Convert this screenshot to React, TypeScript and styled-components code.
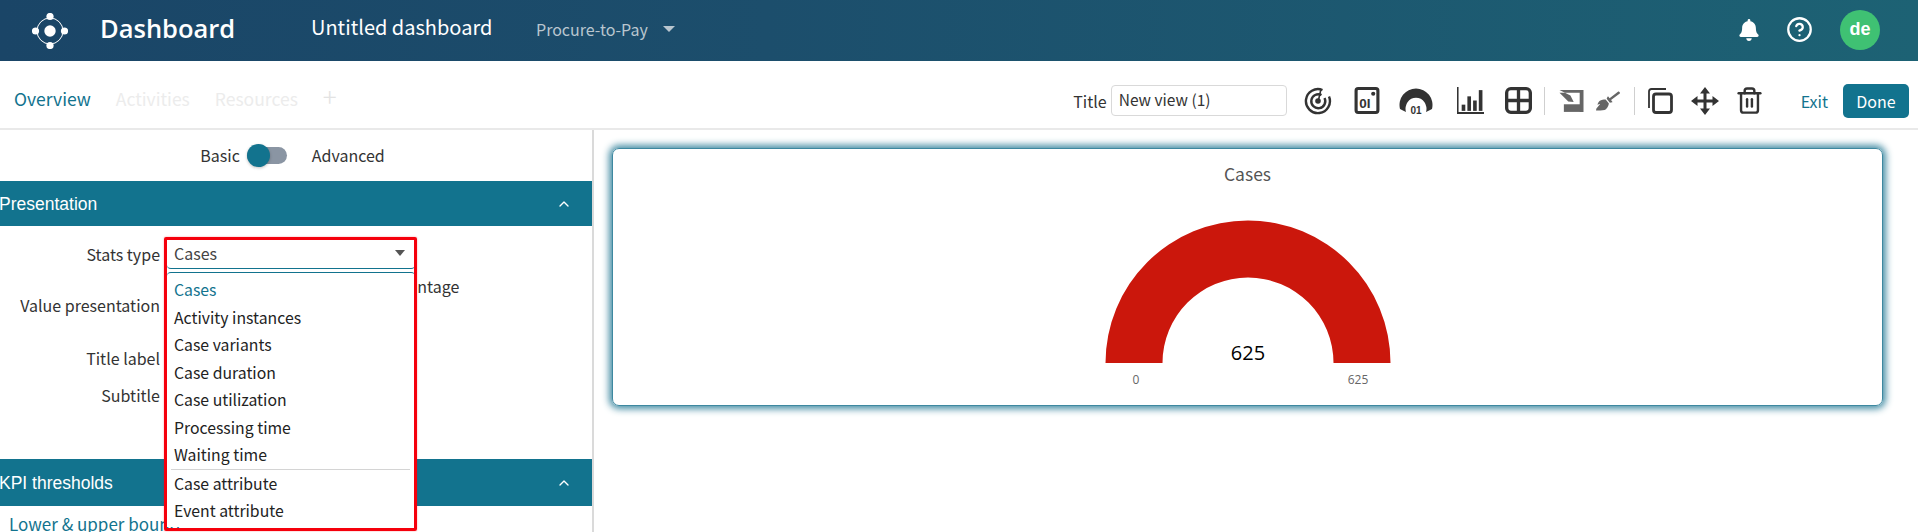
import React from "react";
import styled, { createGlobalStyle } from "styled-components";
import { FaBroom, FaBell } from "react-icons/fa";
import { Trash2, ChevronUp, CircleHelp } from "lucide-react";

const sans = `"Noto Sans CJK SC", "Noto Sans", sans-serif`;
const teal = "#12738e";

const Global = createGlobalStyle`
    html, body {
        margin: 0;
        padding: 0;
        height: 532px;
        overflow: hidden;
        background: #fff;
        font-family: ${sans};
    }
    * { box-sizing: border-box; }
`;

const Page = styled.div`
    width: 1918px;
    height: 532px;
    display: flex;
    flex-direction: column;
    overflow: hidden;
`;
const Header = styled.header`
    height: 61px;
    flex: none;
    display: flex;
    align-items: center;
    padding: 0 38px 0 32px;
    color: #fff;
    background: linear-gradient(90deg, #1a4567 0%, #1c4e6c 40%, #1d6274 100%);
`;
const Brand = styled.div`
    font-family: "Open Sans", sans-serif;
    font-weight: 600;
    font-size: 25.5px;
    margin: 0 0 6px 32px;
    width: 211px;
`;
const BoardName = styled.div`
    font-size: 20px;
    line-height: 28px;
    width: 225px;
    margin-bottom: 8px;
`;
const Process = styled.div`
    font-size: 16px;
    color: #b9c6cf;
    display: flex;
    align-items: center;
    gap: 15px;
    margin-bottom: 3px;
    &::after {
        content: "";
        border-left: 6px solid transparent;
        border-right: 6px solid transparent;
        border-top: 6px solid #b9c6cf;
    }
`;
const HeaderRight = styled.div`
    margin-left: auto;
    display: flex;
    align-items: center;
    margin-bottom: 2px;
`;
const Avatar = styled.div`
    width: 40px;
    height: 40px;
    border-radius: 50%;
    background: #3fc173;
    color: #fff;
    font-family: "Liberation Sans", sans-serif;
    font-weight: 700;
    font-size: 18px;
    display: flex;
    align-items: center;
    justify-content: center;
    margin-left: 27px;
`;
const HelpIcon = styled(CircleHelp)`
    margin-left: 26px;
`;

const Tabs = styled.div`
    height: 69px;
    flex: none;
    display: flex;
    align-items: center;
    padding: 12px 9px 0 14px;
    border-bottom: 2px solid #e9e9e9;
`;
const Tab = styled.span<{ $active?: boolean }>`
    font-size: 17.5px;
    line-height: 24px;
    margin: -4px 25px 0 0;
    color: ${props => (props.$active ? teal : "#ececec")};
`;
const AddTab = styled.span`
    font-size: 26px;
    font-weight: 300;
    line-height: 24px;
    color: #e3e3e3;
    margin-top: -10px;
`;
const Tools = styled.div`
    margin-left: auto;
    display: flex;
    align-items: center;
`;
const TitleLabel = styled.label`
    font-size: 16px;
    color: #333;
    margin-right: 4px;
`;
const TitleInput = styled.div`
    width: 176px;
    height: 31px;
    border: 1px solid #d9d9d9;
    border-radius: 4px;
    padding-left: 7px;
    font-size: 15.5px;
    line-height: 27px;
    color: #333;
    margin-right: 7px;
`;
const ToolIcon = styled.div<{ $width?: number }>`
    width: ${props => props.$width ?? 49}px;
    height: 32px;
    display: flex;
    align-items: center;
    justify-content: center;
    color: #333;
    svg {
        flex: none;
    }
`;
const ToolDivider = styled.div<{ $ml: number }>`
    width: 1px;
    height: 28px;
    margin-left: ${props => props.$ml}px;
    background: #cfcfcf;
`;
const ExitLink = styled.span`
    font-size: 16px;
    color: ${teal};
    margin-left: 24px;
    margin-right: 15px;
`;
const DoneButton = styled.button`
    width: 66px;
    height: 34px;
    border: 0;
    border-radius: 5px;
    background: ${teal};
    color: #fff;
    font-family: ${sans};
    font-size: 16px;
    padding: 0;
`;

const Main = styled.div`
    flex: 1;
    display: flex;
    min-height: 0;
`;
const Sidebar = styled.aside`
    width: 594px;
    flex: none;
    border-right: 2px solid #dadada;
    overflow: hidden;
`;
const ModeRow = styled.div`
    height: 51px;
    display: flex;
    align-items: center;
    justify-content: center;
    padding: 0 7px 2px 0;
    font-size: 16px;
    color: #333;
`;
const ModeSwitch = styled.div`
    position: relative;
    width: 40px;
    height: 17px;
    border-radius: 9px;
    background: #8a95a3;
    margin: 2px 25px 0 7px;
    &::before {
        content: "";
        position: absolute;
        left: 0;
        top: -3px;
        width: 23px;
        height: 23px;
        border-radius: 50%;
        background: ${teal};
        box-shadow: 0 1px 3px rgba(0, 0, 0, .25);
    }
`;
const SectionBar = styled.div<{ $height: number }>`
    height: ${props => props.$height}px;
    display: flex;
    align-items: center;
    justify-content: space-between;
    padding: 1px 20px 0 0;
    background: ${teal};
    color: #fff;
    font-family: "Liberation Sans", sans-serif;
    font-size: 17.5px;
    span {
        margin-left: -1px;
    }
`;
const FormBody = styled.div`
    height: 233px;
    padding-top: 14px;
`;
const FormRow = styled.div<{ $height: number; $gap: number }>`
    height: ${props => props.$height}px;
    margin-bottom: ${props => props.$gap}px;
    display: flex;
`;
const FieldLabel = styled.div`
    width: 160px;
    height: 28px;
    align-self: flex-end;
    text-align: right;
    font-size: 16px;
    line-height: 27px;
    color: #333;
`;
const ValueOption = styled.div`
    margin-left: 216px;
    height: 28px;
    font-size: 16px;
    line-height: 26px;
    color: #333;
`;
const SelectWrap = styled.div`
    position: relative;
    width: 248px;
    margin-left: 7px;
`;
const SelectBox = styled.div`
    height: 29px;
    border-bottom: 1px solid ${teal};
    border-radius: 0 0 4px 4px;
    display: flex;
    align-items: center;
    justify-content: space-between;
    padding: 0 10px 2px 7px;
    font-size: 16px;
    color: #444;
    &::after {
        content: "";
        border-left: 5px solid transparent;
        border-right: 5px solid transparent;
        border-top: 6px solid #555;
    }
`;
const Menu = styled.ul`
    position: absolute;
    z-index: 2;
    left: 0;
    right: 0;
    top: 32px;
    height: 255px;
    margin: 0;
    padding: 3px 0 0;
    list-style: none;
    background: #fff;
    border-top: 1px solid ${teal};
    border-radius: 4px 4px 0 0;
`;
const MenuItem = styled.li<{ $active?: boolean }>`
    height: 27.5px;
    line-height: 27.5px;
    padding-left: 7px;
    font-size: 15.8px;
    color: ${props => (props.$active ? teal : "#222")};
`;
const MenuDivider = styled.li`
    height: 1px;
    margin: 0 5px 0 4px;
    background: #d4d4d4;
`;
const RedFrame = styled.div`
    position: absolute;
    z-index: 3;
    left: -3px;
    right: -2px;
    top: -3px;
    height: 294px;
    border: 3px solid #f5000c;
    border-radius: 2px;
    box-shadow: 0 0 2px rgba(245, 0, 12, .4);
    pointer-events: none;
`;
const BoundsRow = styled.div`
    padding: 11px 0 0 9px;
    font-size: 17px;
    line-height: 14px;
    color: ${teal};
`;

const Canvas = styled.main`
    flex: 1;
    padding: 18px 35px 0 18px;
`;
const GaugeCard = styled.section`
    height: 258px;
    border-radius: 7px;
    border: 1px solid #3d88a0;
    box-shadow: 0 0 7px 3px rgba(62, 137, 161, .95);
    display: flex;
    flex-direction: column;
    align-items: center;
    padding-top: 13px;
`;
const CardTitle = styled.h2`
    margin: 0 0 34px;
    font-size: 17.5px;
    line-height: 24px;
    font-weight: 400;
    color: #555;
`;

const GaugeIcon = () => (
    <svg width="34" height="26" viewBox="0 0 34 26">
        <path d="M1 21 A16.500 16.500 0 1 1 33 21 L27 24 A10.500 11 0 1 0 7 24 Z" fill="#333" />
        <text x="17" y="25.500" textAnchor="middle" fontSize="10" fontWeight="700" fill="#333" fontFamily="Liberation Sans">01</text>
    </svg>
);
const RadarIcon = () => (
    <svg width="28" height="28" viewBox="0 0 28 28" fill="none" stroke="#333" strokeWidth="2.400">
        <path d="M18.500 3 A12 12 0 1 0 25 9.500" />
        <path d="M17.500 8 A7 7 0 1 0 20.500 11" />
        <circle cx="14" cy="14" r="2.800" fill="#333" stroke="none" />
        <path d="M14.500 13 L17 2" strokeWidth="1.600" />
    </svg>
);
const NumberIcon = () => (
    <svg width="26" height="27" viewBox="0 0 24 26">
        <rect x="1.500" y="1.500" width="21" height="23" rx="2" fill="none" stroke="#333" strokeWidth="3" />
        <circle cx="18" cy="6.500" r="2" fill="#333" />
        <text x="10" y="20.500" textAnchor="middle" fontSize="13" fontWeight="700" fill="#333" fontFamily="Liberation Sans">0I</text>
    </svg>
);
const BarsIcon = () => (
    <svg width="27" height="27" viewBox="0 0 26 26" fill="#333">
        <path d="M0 0h1.500v24H26v2H0z" />
        <rect x="4.500" y="17" width="3.500" height="6" />
        <rect x="10" y="9" width="3.500" height="14" />
        <rect x="15.500" y="13" width="3.500" height="10" />
        <rect x="21" y="3" width="3.500" height="20" />
    </svg>
);
const TableIcon = () => (
    <svg width="27" height="27" viewBox="0 0 26 26" fill="none" stroke="#333" strokeWidth="3.200">
        <rect x="1.600" y="1.600" width="22.800" height="22.800" rx="4" />
        <path d="M2 13h22M13 2v22" />
    </svg>
);
const PaintIcon = () => (
    <svg width="27" height="24" viewBox="0 0 24 22" fill="#666">
        <path d="M1 1H23V21H19.500V3.500H6L1 1Z" />
        <path d="M1 3.500 L9 11.500 L14 12 L11 6 L6 3.500 Z" />
        <path d="M5 14H20V21H5Z" />
    </svg>
);
const CopyIcon = () => (
    <svg width="25" height="26" viewBox="0 0 25 26" fill="none" stroke="#333" strokeLinejoin="round">
        <path d="M1 20V3.500Q1 1 3.500 1H18" strokeWidth="1.800" />
        <rect x="5.500" y="6" width="18" height="18.500" rx="2.500" strokeWidth="2.800" />
    </svg>
);
const MoveIcon = () => (
    <svg width="28" height="28" viewBox="0 0 28 28" fill="#333">
        <path d="M14 0l5 6.500H9zM14 28l-5-6.500h10zM0 14l6.500-5v10zM28 14l-6.500 5V9z" />
        <path d="M12.500 5h3v18h-3zM5 12.500h18v3H5z" />
    </svg>
);
const LogoIcon = () => (
    <svg width="36" height="36" viewBox="0 0 36 36" fill="#fff">
        <circle cx="18" cy="18" r="5.700" />
        <circle cx="18" cy="3.500" r="3.600" />
        <circle cx="18" cy="32.500" r="3.600" />
        <circle cx="3.500" cy="18" r="3.600" />
        <circle cx="32.500" cy="18" r="3.600" />
        <circle cx="18" cy="18" r="13" fill="none" stroke="#fff" strokeWidth="1" />
    </svg>
);
const Gauge = () => (
    <svg width="300" height="170" viewBox="0 0 300 170">
        <path d="M7.500 143 A142.500 142.500 0 0 1 292.500 143 H235.500 A85.500 85.500 0 0 0 64.500 143 Z" fill="#cb170c" />
        <text x="150" y="140" textAnchor="middle" fontSize="20" fill="#000" fontFamily="Open Sans">625</text>
        <text x="38" y="163.500" textAnchor="middle" fontSize="12" fill="#666" fontFamily="Open Sans">0</text>
        <text x="260" y="163.500" textAnchor="middle" fontSize="12" fill="#666" fontFamily="Open Sans">625</text>
    </svg>
);

const menuGroups = [
    ["Cases", "Activity instances", "Case variants", "Case duration", "Case utilization", "Processing time", "Waiting time"],
    ["Case attribute", "Event attribute"],
];

const App: React.FC = () => {
    return <>
        <Global />
        <Page>
            <Header>
                <LogoIcon />
                <Brand>Dashboard</Brand>
                <BoardName>Untitled dashboard</BoardName>
                <Process>Procure-to-Pay</Process>
                <HeaderRight>
                    <FaBell size={22} color="#fff" />
                    <HelpIcon size={27} color="#fff" strokeWidth={2} />
                    <Avatar>de</Avatar>
                </HeaderRight>
            </Header>
            <Tabs>
                <Tab $active>Overview</Tab>
                <Tab>Activities</Tab>
                <Tab>Resources</Tab>
                <AddTab>+</AddTab>
                <Tools>
                    <TitleLabel>Title</TitleLabel>
                    <TitleInput>New view (1)</TitleInput>
                    <ToolIcon><RadarIcon /></ToolIcon>
                    <ToolIcon><NumberIcon /></ToolIcon>
                    <ToolIcon><GaugeIcon /></ToolIcon>
                    <ToolIcon $width={59}><BarsIcon /></ToolIcon>
                    <ToolIcon $width={37}><TableIcon /></ToolIcon>
                    <ToolDivider $ml={7} />
                    <ToolIcon $width={54}><PaintIcon /></ToolIcon>
                    <ToolIcon $width={18}><FaBroom size={24} color="#666" /></ToolIcon>
                    <ToolDivider $ml={17} />
                    <ToolIcon $width={52}><CopyIcon /></ToolIcon>
                    <ToolIcon $width={36}><MoveIcon /></ToolIcon>
                    <ToolIcon $width={54}><Trash2 size={29} strokeWidth={2} /></ToolIcon>
                    <ExitLink>Exit</ExitLink>
                    <DoneButton>Done</DoneButton>
                </Tools>
            </Tabs>
            <Main>
                <Sidebar>
                    <ModeRow>
                        Basic
                        <ModeSwitch />
                        Advanced
                    </ModeRow>
                    <SectionBar $height={45}>
                        <span>Presentation</span>
                        <ChevronUp size={16} />
                    </SectionBar>
                    <FormBody>
                        <FormRow $height={29} $gap={4}>
                            <FieldLabel>Stats type</FieldLabel>
                            <SelectWrap>
                                <SelectBox>Cases</SelectBox>
                                <Menu>
                                    {menuGroups.map((group, index) => (
                                        <React.Fragment key={index}>
                                            {index > 0 && <MenuDivider />}
                                            {group.map(item => (
                                                <MenuItem key={item} $active={item === "Cases"}>{item}</MenuItem>
                                            ))}
                                        </React.Fragment>
                                    ))}
                                </Menu>
                                <RedFrame />
                            </SelectWrap>
                        </FormRow>
                        <FormRow $height={47} $gap={25}>
                            <FieldLabel>Value presentation</FieldLabel>
                            <ValueOption>Percentage</ValueOption>
                        </FormRow>
                        <FormRow $height={28} $gap={9}>
                            <FieldLabel>Title label</FieldLabel>
                        </FormRow>
                        <FormRow $height={28} $gap={0}>
                            <FieldLabel>Subtitle</FieldLabel>
                        </FormRow>
                    </FormBody>
                    <SectionBar $height={47}>
                        <span>KPI thresholds</span>
                        <ChevronUp size={16} />
                    </SectionBar>
                    <BoundsRow>Lower &amp; upper bound</BoundsRow>
                </Sidebar>
                <Canvas>
                    <GaugeCard>
                        <CardTitle>Cases</CardTitle>
                        <Gauge />
                    </GaugeCard>
                </Canvas>
            </Main>
        </Page>
    </>;
};
export default App;
